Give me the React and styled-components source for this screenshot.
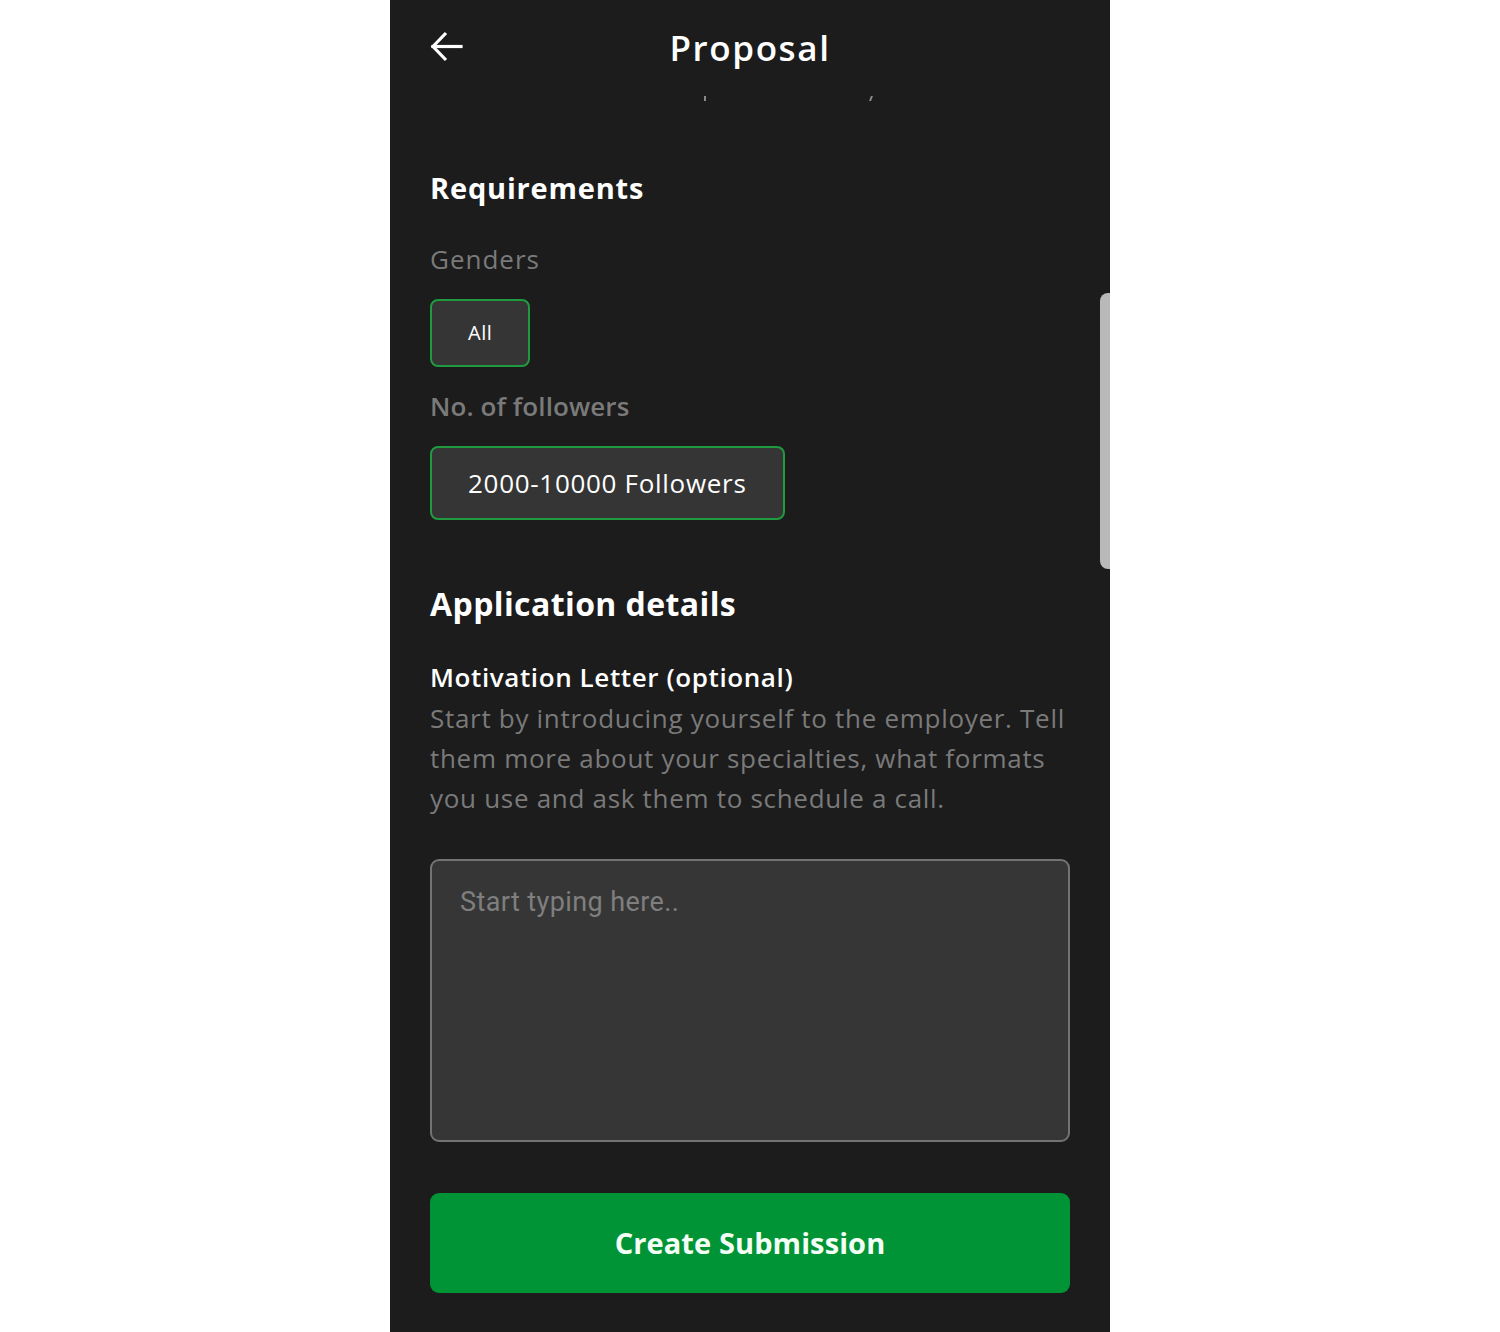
import React from "react";
import styled, { createGlobalStyle } from "styled-components";

const Global = createGlobalStyle`
  html, body { margin: 0; padding: 0; background: #ffffff; }
  * { box-sizing: border-box; }
`;

const Page = styled.div`
  width: 100%;
  display: flex;
  justify-content: center;
`;

const Phone = styled.div`
  position: relative;
  width: 720px;
  height: 1332px;
  background: #1c1c1c;
  overflow: hidden;
  font-family: "Open Sans", "Noto Sans", sans-serif;
  color: #ffffff;
`;

const Header = styled.header`
  height: 94px;
  display: flex;
  align-items: center;
  justify-content: center;
  position: relative;
  padding: 0 40px;
`;

const BackButton = styled.button`
  position: absolute;
  left: 38px;
  top: 28px;
  width: 38px;
  height: 38px;
  padding: 0;
  border: none;
  background: transparent;
  color: #fff;
  display: flex;
  align-items: center;
  justify-content: center;
`;

const Title = styled.h1`
  margin: 0;
  font-size: 35px;
  font-weight: 600;
  letter-spacing: 1.6px;
  line-height: 1;
`;

const ClippedLine = styled.div`
  height: 12px;
  position: relative;
`;

const Tick = styled.span`
  position: absolute;
  top: 2px;
  width: 2px;
  height: 5px;
  background: #8a8a8a;
  transform: skewX(${(p) => p.$skew || 0}deg);
`;

const Content = styled.main`
  padding: 65px 40px 0;
  display: flex;
  flex-direction: column;
`;

const SectionTitle = styled.h2`
  margin: ${(p) => p.$mt || 0}px 0 0;
  font-size: ${(p) => p.$size || 29}px;
  font-weight: 700;
  letter-spacing: ${(p) => p.$ls || 0}px;
  line-height: 1.2;
`;

const Label = styled.div`
  margin-top: ${(p) => p.$mt || 0}px;
  font-size: 26px;
  font-weight: ${(p) => p.$weight || 400};
  letter-spacing: ${(p) => p.$ls || 0}px;
  color: #7a7a7a;
  line-height: 1.2;
`;

const Chip = styled.div`
  align-self: flex-start;
  margin-top: ${(p) => p.$mt || 0}px;
  height: ${(p) => p.$h}px;
  padding: 0 ${(p) => p.$px}px;
  display: flex;
  align-items: center;
  background: #353535;
  border: 2px solid #1f9a3e;
  border-radius: 8px;
  font-size: ${(p) => p.$fs}px;
  letter-spacing: ${(p) => p.$ls || 0}px;
  color: #fff;
`;

const FieldTitle = styled.div`
  margin-top: 38px;
  font-size: 26px;
  font-weight: 600;
  letter-spacing: 0.6px;
  line-height: 1.2;
`;

const Description = styled.p`
  margin: 5px 0 0;
  font-size: 26px;
  line-height: 40px;
  letter-spacing: 0.7px;
  color: #7a7a7a;
`;

const TextArea = styled.textarea`
  margin-top: 41px;
  width: 100%;
  height: 283px;
  resize: none;
  background: #363636;
  border: 2px solid #737373;
  border-radius: 9px;
  padding: 25px 28px;
  font-family: Roboto, "Noto Sans", sans-serif;
  font-size: 27px;
  letter-spacing: 0.4px;
  color: #fff;
  outline: none;
  &::placeholder { color: #7f7f7f; }
`;

const SubmitButton = styled.button`
  margin-top: 51px;
  width: 100%;
  height: 100px;
  border: none;
  border-radius: 9px;
  background: #009436;
  color: #f4fff6;
  font-family: inherit;
  font-size: 29px;
  font-weight: 700;
  letter-spacing: 0.1px;
`;

const ScrollThumb = styled.div`
  position: absolute;
  right: 0;
  top: 293px;
  width: 10px;
  height: 276px;
  background: #b9b9b9;
  border-radius: 8px 0 0 8px;
`;

export default function App() {
  return (
    <Page>
      <Global />
      <Phone>
        <Header>
          <BackButton aria-label="Back">
            <svg width="36" height="36" viewBox="0 0 36 36" fill="none" stroke="#fff" strokeWidth="3.2" strokeLinecap="square">
              <path d="M4 17.5 H32" />
              <path d="M17 4 L4 17.5 L17 31" strokeLinecap="butt" strokeLinejoin="miter" />
            </svg>
          </BackButton>
          <Title>Proposal</Title>
        </Header>
        <ClippedLine>
          <Tick style={{ left: 314 }} />
          <Tick style={{ left: 480 }} $skew={-20} />
        </ClippedLine>
        <Content>
          <SectionTitle $ls={0.8}>Requirements</SectionTitle>
          <Label $mt={38} $ls={1}>Genders</Label>
          <Chip $mt={24} $h={68} $px={36} $fs={20} $ls={0.5}>All</Chip>
          <Label $mt={24} $weight={600} $ls={0.1}>No. of followers</Label>
          <Chip $mt={24} $h={74} $px={36} $fs={26} $ls={0.7}>2000-10000 Followers</Chip>
          <SectionTitle $mt={65} $size={32} $ls={0.4}>Application details</SectionTitle>
          <FieldTitle>Motivation Letter (optional)</FieldTitle>
          <Description>
            Start by introducing yourself to the employer. Tell them more about your specialties, what formats you use and ask them to schedule a call.
          </Description>
          <TextArea placeholder="Start typing here.." />
          <SubmitButton>Create Submission</SubmitButton>
        </Content>
        <ScrollThumb />
      </Phone>
    </Page>
  );
}
